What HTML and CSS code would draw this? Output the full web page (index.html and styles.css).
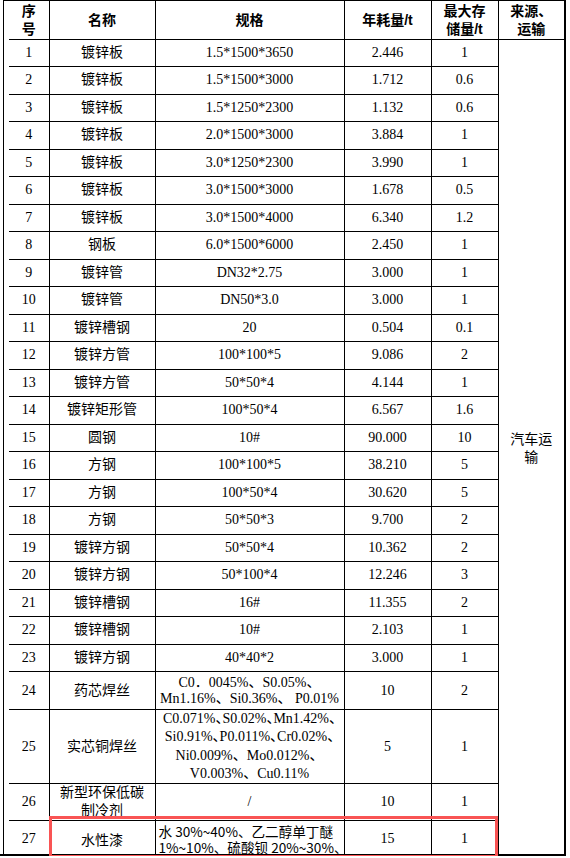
FILE: index.html
```html
<!DOCTYPE html>
<html lang="zh-CN">
<head>
<meta charset="utf-8">
<title>原辅材料表</title>
<link rel="stylesheet" href="styles.css">
</head>
<body>
<div class="page">
  <div class="sheet">
    <table class="tbl">
      <colgroup>
        <col class="c-no"><col class="c-name"><col class="c-spec"><col class="c-year"><col class="c-max"><col class="c-src">
      </colgroup>
      <thead>
        <tr class="head">
          <th>序<br>号</th>
          <th>名称</th>
          <th>规格</th>
          <th>年耗量/t</th>
          <th>最大存<br>储量/t</th>
          <th class="src">来源、<br>运输</th>
        </tr>
      </thead>
      <tbody>
        <tr class="r"><td>1</td><td>镀锌板</td><td>1.5*1500*3650</td><td>2.446</td><td>1</td><td class="src" rowspan="27">汽车运<br>输</td></tr>
        <tr class="r"><td>2</td><td>镀锌板</td><td>1.5*1500*3000</td><td>1.712</td><td>0.6</td></tr>
        <tr class="r"><td>3</td><td>镀锌板</td><td>1.5*1250*2300</td><td>1.132</td><td>0.6</td></tr>
        <tr class="r"><td>4</td><td>镀锌板</td><td>2.0*1500*3000</td><td>3.884</td><td>1</td></tr>
        <tr class="r"><td>5</td><td>镀锌板</td><td>3.0*1250*2300</td><td>3.990</td><td>1</td></tr>
        <tr class="r"><td>6</td><td>镀锌板</td><td>3.0*1500*3000</td><td>1.678</td><td>0.5</td></tr>
        <tr class="r"><td>7</td><td>镀锌板</td><td>3.0*1500*4000</td><td>6.340</td><td>1.2</td></tr>
        <tr class="r"><td>8</td><td>钢板</td><td>6.0*1500*6000</td><td>2.450</td><td>1</td></tr>
        <tr class="r"><td>9</td><td>镀锌管</td><td>DN32*2.75</td><td>3.000</td><td>1</td></tr>
        <tr class="r"><td>10</td><td>镀锌管</td><td>DN50*3.0</td><td>3.000</td><td>1</td></tr>
        <tr class="r"><td>11</td><td>镀锌槽钢</td><td>20</td><td>0.504</td><td>0.1</td></tr>
        <tr class="r"><td>12</td><td>镀锌方管</td><td>100*100*5</td><td>9.086</td><td>2</td></tr>
        <tr class="r"><td>13</td><td>镀锌方管</td><td>50*50*4</td><td>4.144</td><td>1</td></tr>
        <tr class="r"><td>14</td><td>镀锌矩形管</td><td>100*50*4</td><td>6.567</td><td>1.6</td></tr>
        <tr class="r"><td>15</td><td>圆钢</td><td>10#</td><td>90.000</td><td>10</td></tr>
        <tr class="r"><td>16</td><td>方钢</td><td>100*100*5</td><td>38.210</td><td>5</td></tr>
        <tr class="r"><td>17</td><td>方钢</td><td>100*50*4</td><td>30.620</td><td>5</td></tr>
        <tr class="r"><td>18</td><td>方钢</td><td>50*50*3</td><td>9.700</td><td>2</td></tr>
        <tr class="r"><td>19</td><td>镀锌方钢</td><td>50*50*4</td><td>10.362</td><td>2</td></tr>
        <tr class="r"><td>20</td><td>镀锌方钢</td><td>50*100*4</td><td>12.246</td><td>3</td></tr>
        <tr class="r"><td>21</td><td>镀锌槽钢</td><td>16#</td><td>11.355</td><td>2</td></tr>
        <tr class="r"><td>22</td><td>镀锌槽钢</td><td>10#</td><td>2.103</td><td>1</td></tr>
        <tr class="r"><td>23</td><td>镀锌方钢</td><td>40*40*2</td><td>3.000</td><td>1</td></tr>
        <tr class="r24"><td>24</td><td>药芯焊丝</td><td class="multi m16"><span class="ln">C0．0045%、S0.05%、</span><span class="ln">Mn1.16%、Si0.36%、 P0.01%</span></td><td>10</td><td>2</td></tr>
        <tr class="r25"><td>25</td><td>实芯铜焊丝</td><td class="multi m18"><span class="ln half">C0.071%、S0.02%、Mn1.42%、</span><span class="ln half">Si0.91%、P0.011%、Cr0.02%、</span><span class="ln">Ni0.009%、Mo0.012%、</span><span class="ln">V0.003%、Cu0.11%</span></td><td>5</td><td>1</td></tr>
        <tr class="r26"><td>26</td><td class="wrap2">新型环保低碳<br>制冷剂</td><td>/</td><td>10</td><td>1</td></tr>
        <tr class="r27"><td>27</td><td class="sans">水性漆</td><td class="sans left m17">水 30%~40%、乙二醇单丁醚<br>1%~10%、硫酸钡 20%~30%、</td><td>15</td><td>1</td></tr>
      </tbody>
    </table>
  </div>
  <div class="mark"></div>
</div>
</body>
</html>
```

FILE: styles.css
```css
html, body {
  margin: 0;
  padding: 0;
  background: #fff;
}

.page {
  position: relative;
  width: 566px;
  height: 856px;
  box-sizing: border-box;
  border-bottom: 2px solid #000;
}

.sheet {
  margin-left: 3px;
  padding-left: 5px;
  border-left: 1px solid #000;
  border-top: 1px solid #000;
  height: 100%;
  box-sizing: border-box;
}

.tbl {
  border-collapse: collapse;
  table-layout: fixed;
  width: 556px;
  font-family: "Liberation Serif", "Noto Sans CJK SC", serif;
  font-size: 14px;
  color: #000;
}

.c-no { width: 40px; }
.c-name { width: 106px; }
.c-spec { width: 189px; }
.c-year { width: 87px; }
.c-max { width: 67px; }
.c-src { width: 67px; }

.tbl th,
.tbl td {
  border: 1px solid #000;
  padding: 0 3px;
  text-align: center;
  vertical-align: middle;
  white-space: nowrap;
  line-height: 18px;
}

.tbl tr > :first-child { border-left: 0; }
.tbl thead th { border-top: 0; }
.tbl .src { border-right: 2px solid #000; }
.tbl td.src { border-bottom: 0; }
.tbl .r27 td { border-bottom: 0; }

.head { height: 38px; }
.head th {
  font-family: "Liberation Sans", "Noto Sans CJK SC", sans-serif;
  font-weight: bold;
  font-size: 14px;
  line-height: 18px;
}

.r { height: 27.5px; }
.r24 { height: 38px; }
.r25 { height: 73px; }
.r26 { height: 36px; }
.r27 { height: 37px; }

.multi .ln { display: block; }
.tbl .m16 { line-height: 16px; }
.tbl .m18 { line-height: 18.25px; }
.half { font-feature-settings: "halt" 1; }

.tbl .wrap2 { line-height: 18px; }

.sans {
  font-family: "Noto Sans CJK SC", "Noto Sans", sans-serif;
}
.tbl .left { text-align: left; }
.tbl .m17 {
  line-height: 16.5px;
  font-size: 13.6px;
}

.mark {
  position: absolute;
  left: 49px;
  top: 816px;
  width: 449px;
  height: 42px;
  box-sizing: border-box;
  border: 3px solid #f95454;
}
```
